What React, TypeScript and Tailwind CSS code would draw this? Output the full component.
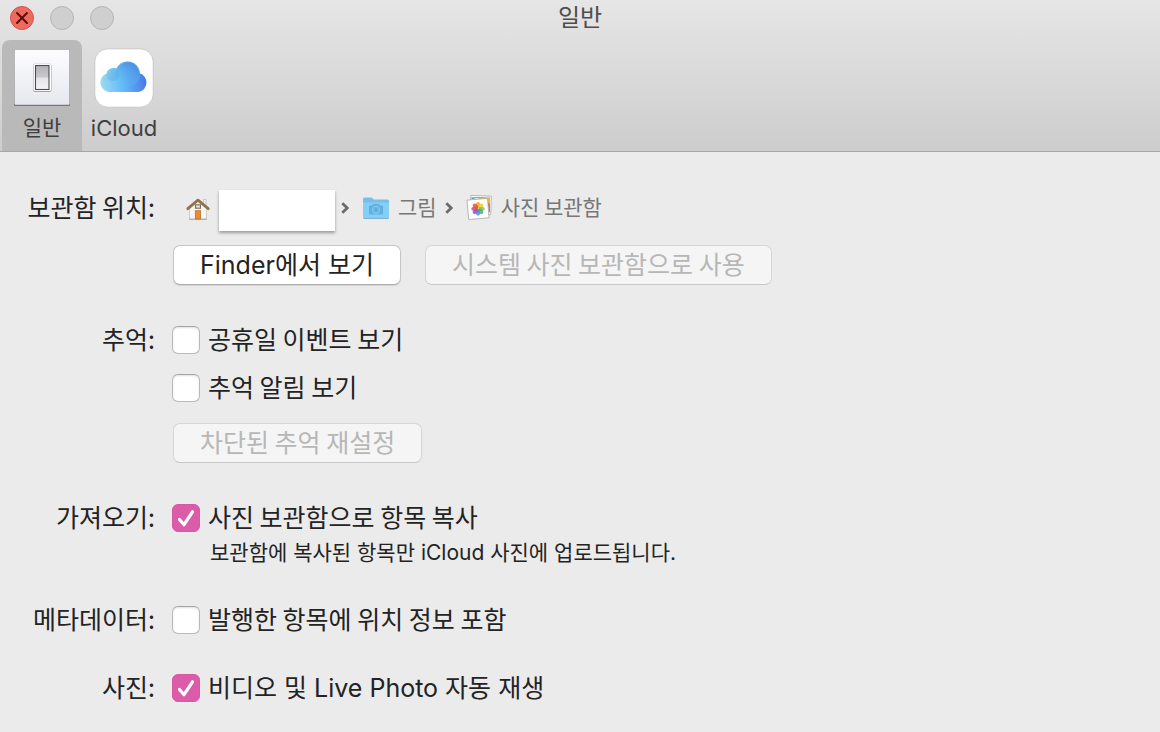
import { useState } from "react";
import type { ReactNode } from "react";
import { X } from "lucide-react";

const petals = [
  { angle: 0, color: "#f6a21d" },
  { angle: 45, color: "#e8d21f" },
  { angle: 90, color: "#8cc24a" },
  { angle: 135, color: "#3fae8f" },
  { angle: 180, color: "#4a8fd6" },
  { angle: 225, color: "#7c62b5" },
  { angle: 270, color: "#c04f9a" },
  { angle: 315, color: "#ee4b35" },
];

// Text that mixes Latin words with Hangul
function Mixed({ children }: { children: ReactNode }) {
  return <span className="font-['Inter','Noto_Sans_CJK_KR',sans-serif] leading-none">{children}</span>;
}

function SwitchIcon() {
  return (
    <svg viewBox="0 0 60 60" className="h-[60px] w-[60px]" aria-hidden="true">
      <defs>
        <linearGradient id="plate" x1="0" y1="0" x2="0" y2="1">
          <stop offset="0" stopColor="#fdfdff" />
          <stop offset="1" stopColor="#e6e8ef" />
        </linearGradient>
        <linearGradient id="rocker" x1="0" y1="0" x2="0" y2="1">
          <stop offset="0" stopColor="#b2b2b6" />
          <stop offset="0.48" stopColor="#c9c9cd" />
          <stop offset="0.52" stopColor="#e4e4e9" />
          <stop offset="1" stopColor="#f4f4f8" />
        </linearGradient>
      </defs>
      <rect x="2" y="2" width="56" height="56" rx="1" fill="#74767a" />
      <rect x="2.5" y="2" width="55" height="54.8" rx="1" fill="url(#plate)" />
      <rect x="21" y="15.5" width="18.5" height="28.5" rx="2" fill="#a2a2a4" />
      <rect x="21.5" y="15.5" width="17.500" height="27.500" rx="1.5" fill="#fff" />
      <rect x="23.5" y="17.500" width="13.500" height="24" fill="url(#rocker)" stroke="#4c4c50" strokeWidth="1.1" />
    </svg>
  );
}

function CloudIcon() {
  return (
    <svg viewBox="0 0 60 60" className="h-[60px] w-[60px]" aria-hidden="true">
      <defs>
        <linearGradient id="cloud" x1="0" y1="0.6" x2="1" y2="0.5">
          <stop offset="0" stopColor="#9ad9f3" />
          <stop offset="0.45" stopColor="#65bcf5" />
          <stop offset="1" stopColor="#4478e8" />
        </linearGradient>
        <linearGradient id="puff" x1="0" y1="0" x2="1" y2="0.6">
          <stop offset="0" stopColor="#8bd3ee" />
          <stop offset="1" stopColor="#4fa8e6" stopOpacity="0.4" />
        </linearGradient>
        <linearGradient id="dome" x1="0.2" y1="1" x2="0.7" y2="0">
          <stop offset="0" stopColor="#6bc4f7" stopOpacity="0" />
          <stop offset="1" stopColor="#4590e0" />
        </linearGradient>
      </defs>
      <rect x="0.8" y="0.8" width="58.4" height="58.4" rx="13" fill="#fff" stroke="#c2c2c2" strokeWidth="0.8" />
      <path
        d="M16 44A9.500 9.500 0 0 1 12.900 25.500A7.500 7.500 0 0 1 22.500 20.400A12.500 12.500 0 0 1 45.500 25.300A9.600 9.600 0 0 1 44.500 44Z"
        fill="url(#cloud)"
      />
      <circle cx="33.500" cy="26.200" r="12.600" fill="url(#dome)" />
      <circle cx="18.800" cy="26.500" r="6.500" fill="url(#puff)" />
    </svg>
  );
}

function HomeIcon() {
  return (
    <svg viewBox="0 0 26 26" className="h-[26px] w-[26px]" aria-hidden="true">
      <path d="M18.500 4.500H21v6h-2.500z" fill="#f2f2f2" stroke="#aaa" strokeWidth="0.6" />
      <path d="M4.500 13 13 5.500l8.500 7.500v11h-17z" fill="#f6f6f7" stroke="#bbb" strokeWidth="0.7" />
      <path d="M4 24.300h18" stroke="#999" strokeWidth="0.8" />
      <path d="M2.800 13.700 13 5.200l10.200 8.500" fill="none" stroke="#8f734f" strokeWidth="2.800" strokeLinejoin="round" strokeLinecap="round" />
      <rect x="10.500" y="9.800" width="5" height="3.400" fill="#dbe4ec" stroke="#8c6b45" strokeWidth="1.100" />
      <rect x="10.300" y="15.700" width="5.400" height="8.300" fill="#f08c24" stroke="#a86e34" strokeWidth="0.7" />
    </svg>
  );
}

function FolderIcon() {
  return (
    <svg viewBox="0 0 28 24" className="h-6 w-7" aria-hidden="true">
      <path d="M1 3Q1 1.500 2.500 1.500h6.500Q10 1.500 10.700 2.500l.8 1H25.500Q27 3.500 27 5V21Q27 22.500 25.500 22.500h-23Q1 22.500 1 21z" fill="#76bfe6" />
      <path d="M1 6.500h26v14.500q0 1.200-1.500 1.200h-23Q1 22.200 1 21z" fill="#83cff8" />
      <path d="M8 9.500H10l1-1.500h6l1 1.500h2q1 0 1 1V17.500q0 1-1 1H8q-1 0-1-1v-7q0-1 1-1z" fill="#60afdd" />
      <circle cx="14" cy="13.800" r="3.600" fill="#6ab8e6" stroke="#8dd0f4" strokeWidth="0.9" />
      <circle cx="14" cy="13.800" r="1.600" fill="#5ba9d8" />
      <path d="M1.500 22.500h25" stroke="#6aa4c6" strokeWidth="0.7" />
    </svg>
  );
}

function PhotosIcon() {
  return (
    <svg viewBox="0 0 28 28" className="h-7 w-7" aria-hidden="true">
      <rect x="5.500" y="1.800" width="20.500" height="18.500" fill="#fff" stroke="#aaa" strokeWidth="0.8" transform="rotate(2 15 12)" />
      <path d="M6.500 3.200h9l-9 2z" fill="#4f9fd0" />
      <path d="M11 3.200h10l-5 1.800z" fill="#63ae62" />
      <path d="M9 5.500 20 3.300h5v15l-2.500-13z" fill="#f0b62d" />
      <path d="m22.700 8 2.200 2v8l-1.200 1z" fill="#dd6a4a" />
      <rect x="2.800" y="5.200" width="20.500" height="19.500" fill="#fff" stroke="#a8a8a8" strokeWidth="0.8" transform="rotate(-5 13 15)" />
      {petals.map((petal) => (
        <ellipse
          key={petal.angle}
          cx="13"
          cy="11.200"
          rx="2.100"
          ry="3.100"
          fill={petal.color}
          fillOpacity="0.85"
          transform={`rotate(${petal.angle} 13 14.800)`}
        />
      ))}
    </svg>
  );
}

function Chevron() {
  return (
    <svg viewBox="0 0 8 12" className="h-3 w-2 shrink-0" fill="none" stroke="#6b6b6b" strokeWidth="2.800" aria-hidden="true">
      <path d="m1.300 1.300 4.900 4.700-4.900 4.700" />
    </svg>
  );
}

function Row({ label, children }: { label: string; children: ReactNode }) {
  return (
    <section className="grid grid-cols-[155px_1fr] gap-x-[17px]">
      <h2 className="text-right leading-6 whitespace-nowrap">{label}</h2>
      <div className="flex flex-col items-start">{children}</div>
    </section>
  );
}

function PushButton({ disabled, children }: { disabled?: boolean; children: ReactNode }) {
  return (
    <button
      type="button"
      disabled={disabled}
      className={`my-px ml-px flex h-10 items-center rounded-[7px] border px-[26px] pb-1 whitespace-nowrap ${
        disabled
          ? "border-[#d6d6d6] border-b-[#c8c8c8] bg-[#f5f5f5] text-[#b7b7b7]"
          : "border-[#c6c6c6] border-b-[#adadad] bg-white shadow-[0_1px_1px_rgba(0,0,0,0.1)]"
      }`}
    >
      <span>{children}</span>
    </button>
  );
}

function Check({ defaultChecked = false, children }: { defaultChecked?: boolean; children: ReactNode }) {
  const [checked, setChecked] = useState(defaultChecked);

  return (
    <label className="flex h-7 items-start gap-2 whitespace-nowrap">
      <span className="grid h-7 w-7 shrink-0">
        <input
          type="checkbox"
          checked={checked}
          onChange={(e) => setChecked(e.target.checked)}
          className="col-start-1 row-start-1 h-7 w-7 appearance-none rounded-[6px] border border-[#b9b9b9] border-t-[#a5a5a5] bg-white shadow-[inset_0_1px_2px_rgba(0,0,0,0.12)] checked:border-[#d957a4] checked:bg-[#dc5ca9] checked:shadow-none"
        />
        {checked && (
          <svg
            viewBox="0 0 28 28"
            className="pointer-events-none col-start-1 row-start-1 h-7 w-7"
            fill="none"
            stroke="#fff"
            strokeWidth="3.2"
            strokeLinecap="round"
            strokeLinejoin="round"
            aria-hidden="true"
          >
            <path d="m7.500 15.500 4.500 5.200L20.500 7.800" />
          </svg>
        )}
      </span>
      <span className="leading-6">{children}</span>
    </label>
  );
}

export default function App() {
  return (
    <div className="min-h-screen bg-[#ebebeb] font-['Noto_Sans_CJK_KR',sans-serif] text-[25px] leading-7 text-[#232323]">
      <header className="border-b border-[#a6a6a6] bg-linear-to-b from-[#e6e6e6] to-[#cdcdcd]">
        {/* Title bar */}
        <div className="grid h-10 grid-cols-[1fr_auto_1fr] items-start pt-1">
          <div className="flex gap-4 pt-0.5 pl-2.5">
            <button
              type="button"
              aria-label="닫기"
              className="flex h-6 w-6 items-center justify-center rounded-full border border-[#d1544b] bg-[#ee6a5f] text-[#560f0a]"
            >
              <X className="h-5 w-5 shrink-0" strokeWidth={2.3} />
            </button>
            <button type="button" disabled aria-label="최소화" className="h-6 w-6 rounded-full border border-[#b4b4b4] bg-[#cfcfcf]" />
            <button type="button" disabled aria-label="확대" className="h-6 w-6 rounded-full border border-[#b4b4b4] bg-[#cfcfcf]" />
          </div>
          <h1 className="text-[24px] leading-6 text-[#4e4e4e]">일반</h1>
          <div />
        </div>

        {/* Toolbar */}
        <nav className="flex pl-0.5 text-[22px] text-[#404040]">
          <button type="button" aria-current="page" className="flex h-[111px] w-20 flex-col items-center rounded-t-[8px] bg-[#b9b9b9] pt-2">
            <SwitchIcon />
            <span className="mt-1 text-[21px] leading-7">일반</span>
          </button>
          <button type="button" className="flex h-[111px] w-[84px] flex-col items-center pt-2">
            <CloudIcon />
            <span className="mt-1 leading-7">
              <Mixed>iCloud</Mixed>
            </span>
          </button>
        </nav>
      </header>

      <main className="flex flex-col gap-10 pt-9 pb-[30px]">
        <section className="grid grid-cols-[155px_1fr] gap-x-[17px]">
          <h2 className="text-right leading-9 whitespace-nowrap">보관함 위치:</h2>
          <div>
            <div className="flex h-10 items-center pl-[13px] text-[21px] text-[#777]">
              <HomeIcon />
              <div className="mt-1 ml-2 h-[41px] w-[116px] bg-white shadow-[0_2px_3px_rgba(0,0,0,0.35)]" />
              <div className="ml-1.5 flex items-center">
                <Chevron />
                <span className="mr-2 ml-[13px]">
                  <FolderIcon />
                </span>
                <span className="pb-1">그림</span>
                <span className="mr-3 ml-2">
                  <Chevron />
                </span>
                <PhotosIcon />
                <span className="ml-2 pb-1">사진 보관함</span>
              </div>
            </div>
            <div className="mt-4 flex gap-[23px]">
              <PushButton>
                <Mixed>Finder에서 보기</Mixed>
              </PushButton>
              <PushButton disabled>시스템 사진 보관함으로 사용</PushButton>
            </div>
          </div>
        </section>

        <Row label="추억:">
          <div className="flex flex-col items-start gap-5">
            <Check>공휴일 이벤트 보기</Check>
            <Check>추억 알림 보기</Check>
            <PushButton disabled>차단된 추억 재설정</PushButton>
          </div>
        </Row>

        <Row label="가져오기:">
          <Check defaultChecked>사진 보관함으로 항목 복사</Check>
          <p className="mt-1 pl-[38px] text-[21px] leading-[30px]">
            <Mixed>보관함에 복사된 항목만 iCloud 사진에 업로드됩니다.</Mixed>
          </p>
        </Row>

        <Row label="메타데이터:">
          <Check>발행한 항목에 위치 정보 포함</Check>
        </Row>

        <Row label="사진:">
          <Check defaultChecked>
            <Mixed>비디오 및 Live Photo 자동 재생</Mixed>
          </Check>
        </Row>
      </main>
    </div>
  );
}
